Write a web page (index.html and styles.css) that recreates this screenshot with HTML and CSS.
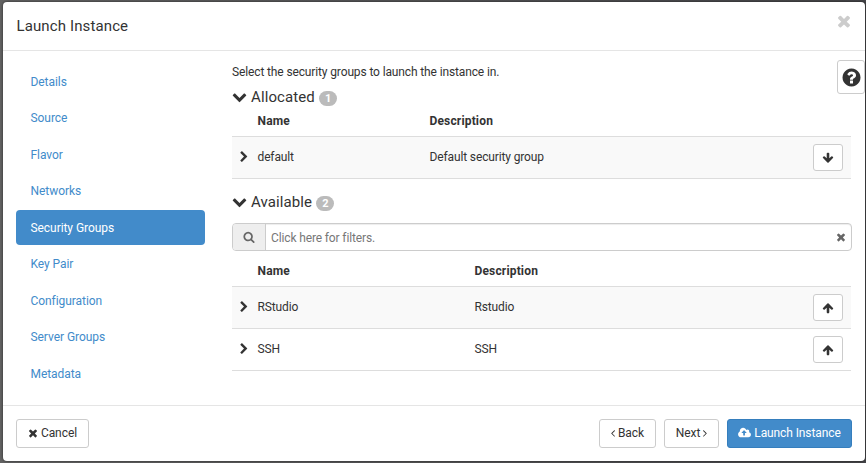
FILE: index.html
```html
<!DOCTYPE html>
<html lang="en">
<head>
<meta charset="utf-8">
<title>Launch Instance</title>
<link rel="stylesheet" href="styles.css">
</head>
<body>
<svg class="defs" aria-hidden="true">
  <symbol id="times" viewBox="0 0 1792 1792"><path d="M1490 1322q0 40-28 68l-136 136q-28 28-68 28t-68-28l-294-294-294 294q-28 28-68 28t-68-28l-136-136q-28-28-28-68t28-68l294-294-294-294q-28-28-28-68t28-68l136-136q28-28 68-28t68 28l294 294 294-294q28-28 68-28t68 28l136 136q28 28 28 68t-28 68l-294 294 294 294q28 28 28 68z"/></symbol>
  <symbol id="right" viewBox="0 0 1792 1792"><path d="M1363 877l-742 742q-19 19-45 19t-45-19l-166-166q-19-19-19-45t19-45l531-531-531-531q-19-19-19-45t19-45l166-166q19-19 45-19t45 19l742 742q19 19 19 45t-19 45z"/></symbol>
  <symbol id="down" viewBox="0 0 1792 1792"><path d="M1683 808l-742 741q-19 19-45 19t-45-19l-742-741q-19-19-19-45.500t19-45.500l166-165q19-19 45-19t45 19l531 531 531-531q19-19 45-19t45 19l166 165q19 19 19 45.500t-19 45.500z"/></symbol>
  <symbol id="arrow" viewBox="0 0 1792 1792"><path d="M1675 971q0 51-37 90l-75 75q-38 38-91 38-54 0-90-38l-294-293v704q0 52-37.500 84.500t-90.500 32.500h-128q-53 0-90.500-32.500t-37.500-84.500v-704l-294 293q-36 38-90 38t-90-38l-75-75q-38-38-38-90 0-53 38-91l651-651q35-37 90-37 54 0 91 37l651 651q37 39 37 91z"/></symbol>
  <symbol id="search" viewBox="0 0 1792 1792"><path d="M1216 832q0-185-131.500-316.500t-316.500-131.500-316.500 131.500-131.500 316.500 131.500 316.500 316.500 131.500 316.500-131.500 131.500-316.500zm512 832q0 52-38 90t-90 38q-54 0-90-38l-343-342q-179 124-399 124-143 0-273.500-55.500t-225-150-150-225-55.500-273.500 55.500-273.500 150-225 225-150 273.500-55.500 273.500 55.500 225 150 150 225 55.500 273.500q0 220-124 399l343 343q37 37 37 90z"/></symbol>
  <symbol id="question" viewBox="0 0 1792 1792"><path d="M1024 1376v-192q0-14-9-23t-23-9h-192q-14 0-23 9t-9 23v192q0 14 9 23t23 9h192q14 0 23-9t9-23zm256-672q0-88-55.500-163t-138.500-116-170-41q-243 0-371 213-15 24 8 42l132 100q7 6 19 6 16 0 25-12 53-68 86-92 34-24 86-24 48 0 85.500 26t37.500 59q0 38-20 61t-68 45q-63 28-115.500 86.500t-52.500 125.500v36q0 14 9 23t23 9h192q14 0 23-9t9-23q0-19 21.500-49.500t54.500-49.500q32-18 49-28.500t46-35 44.500-48 28-60.500 12.500-81zm384 192q0 209-103 385.500t-279.500 279.500-385.500 103-385.500-103-279.500-279.500-103-385.500 103-385.500 279.500-279.500 385.500-103 385.500 103 279.500 279.500 103 385.500z"/></symbol>
  <symbol id="angle" viewBox="580 0 620 1792"><path d="M1171 960q0 13-10 23l-466 466q-10 10-23 10t-23-10l-50-50q-10-10-10-23t10-23l393-393-393-393q-10-10-10-23t10-23l50-50q10-10 23-10t23 10l466 466q10 10 10 23z"/></symbol>
  <symbol id="cloud" viewBox="0 0 1920 1792"><path d="M1280 864q0-14-9-23l-352-352q-9-9-23-9t-23 9l-351 351q-10 12-10 24 0 14 9 23t23 9h224v352q0 13 9.500 22.500t22.500 9.500h192q13 0 22.500-9.500t9.500-22.500v-352h224q13 0 22.500-9.500t9.500-22.500zm640 288q0 159-112.500 271.500t-271.500 112.500h-1088q-185 0-316.500-131.500t-131.500-316.500q0-130 70-240t188-165q-2-30-2-43 0-212 150-362t362-150q156 0 285.500 87t188.500 231q71-62 166-62 106 0 181 75t75 181q0 76-41 138 130 31 213.500 135.500t83.500 238.500z"/></symbol>
</svg>
<div class="modal">
  <header class="modal-header">
    <h1>Launch Instance</h1>
    <svg class="close"><use href="#times"/></svg>
  </header>
  <div class="modal-body">
    <nav class="steps">
      <a>Details</a>
      <a>Source</a>
      <a>Flavor</a>
      <a>Networks</a>
      <a class="active">Security Groups</a>
      <a>Key Pair</a>
      <a>Configuration</a>
      <a>Server Groups</a>
      <a>Metadata</a>
    </nav>
    <main class="content">
      <p>Select the security groups to launch the instance in.</p>
      <h2><svg><use href="#down"/></svg><span>Allocated</span><b class="badge">1</b></h2>
      <div class="table allocated">
        <div class="row head"><span></span><span>Name</span><span>Description</span></div>
        <div class="row odd"><svg class="icon"><use href="#right"/></svg><span>default</span><span>Default security group</span><button class="move"><svg class="icon flip"><use href="#arrow"/></svg></button></div>
      </div>
      <h2 class="second"><svg><use href="#down"/></svg><span>Available</span><b class="badge">2</b></h2>
      <div class="filter">
        <span class="addon"><svg class="icon"><use href="#search"/></svg></span>
        <span class="placeholder">Click here for filters.</span>
        <svg class="icon clear"><use href="#times"/></svg>
      </div>
      <div class="table available">
        <div class="row head"><span></span><span>Name</span><span>Description</span></div>
        <div class="row odd"><svg class="icon"><use href="#right"/></svg><span>RStudio</span><span>Rstudio</span><button class="move"><svg class="icon"><use href="#arrow"/></svg></button></div>
        <div class="row"><svg class="icon"><use href="#right"/></svg><span>SSH</span><span>SSH</span><button class="move"><svg class="icon"><use href="#arrow"/></svg></button></div>
      </div>
    </main>
    <button class="help"><svg><use href="#question"/></svg></button>
  </div>
  <footer class="modal-footer">
    <button class="btn cancel"><svg class="icon"><use href="#times"/></svg>Cancel</button>
    <button class="btn back"><svg class="angle flip-x"><use href="#angle"/></svg>Back</button>
    <button class="btn next">Next<svg class="angle"><use href="#angle"/></svg></button>
    <button class="btn primary"><svg class="cloud"><use href="#cloud"/></svg>Launch Instance</button>
  </footer>
</div>
</body>
</html>
```

FILE: styles.css
```css
* { box-sizing: border-box; }
body {
  margin: 0;
  height: 463px;
  padding: 2px 1px 2px 3px;
  overflow: hidden;
  background: linear-gradient(90deg, #636363, #454548);
  font: 12px/17px Roboto, "Liberation Sans", sans-serif;
  letter-spacing: -.13px;
  color: #333;
}
svg { display: block; fill: currentColor; flex: none; }
.defs { display: none; }
.icon { width: 12px; height: 12px; }
.flip { transform: rotate(180deg); }
.flip-x { transform: scaleX(-1); }
button { font: inherit; letter-spacing: inherit; color: inherit; background: #fff; border: 1px solid #ccc; border-radius: 3px; padding: 0; }

.modal {
  height: 459px;
  display: flex;
  flex-direction: column;
  background: #fff;
  border-radius: 4px;
  box-shadow: 0 0 3px rgba(0, 0, 0, .6);
}
.modal-header {
  height: 49px;
  padding: 0 13px 0 13.500px;
  display: flex;
  align-items: center;
  justify-content: space-between;
  border-bottom: 1px solid #e5e5e5;
}
h1, h2 { margin: 0; font-weight: 400; font-size: 15px; color: #333; }
h1 { line-height: 20px; letter-spacing: .12px; }
.close { width: 18px; height: 18px; color: #ccc; margin: -10px -1px 0 0; }

.modal-body { height: 354px; display: flex; }
.steps { width: 189px; margin: 13px 27px 0 13px; display: flex; flex-direction: column; gap: 1.5px; }
.steps a { height: 35px; padding: 9.500px 14.500px 0; color: #428bca; border-radius: 4px; letter-spacing: -.06px; }
.steps .active { background: #428bca; color: #fff; }

.content { width: 620px; padding-top: 13px; }
p { margin: 0; }
h2 { display: flex; align-items: center; height: 18px; margin-top: 7px; letter-spacing: .1px; }
h2 svg { width: 15px; height: 15px; margin: -1px 4px 0 0; }
.badge { background: #bbb; color: #fff; font-size: 11px; font-weight: 700; line-height: 15px; height: 15px; padding: 0 6px; border-radius: 8px; margin: 3px 0 0 4px; letter-spacing: 0; }
h2.second { margin-top: 14px; }
.table { width: 619px; }
.row { display: grid; align-items: center; height: 42px; border-bottom: 1px solid #ddd; padding-right: 8px; }
.row > .icon { margin: -2px 0 0 5.500px; }
.allocated .row { grid-template-columns: 25.500px 172px 1fr 30px; }
.available .row { grid-template-columns: 25.500px 217px 1fr 30px; }
.head { height: 31px; font-weight: 700; letter-spacing: .16px; }
.available .head { height: 36px; padding-top: 5px; }
.odd { background: #f9f9f9; }
.move { width: 30px; height: 27px; display: grid; place-items: center; }

.filter { width: 620px; height: 28px; margin-top: 12px; display: flex; align-items: center; border: 1px solid #ccc; border-radius: 4px; overflow: hidden; box-shadow: inset 0 1px 1px rgba(0, 0, 0, .075); }
.addon { width: 33px; height: 26px; display: grid; place-items: center; background: #eee; border-right: 1px solid #ccc; color: #666; }
.placeholder { flex: 1; padding: 2px 0 0 5px; color: #777; }
.clear { color: #666; margin-right: 4.500px; }

.help { width: 28px; height: 34px; display: grid; place-items: center; position: absolute; top: 60px; right: 1px; }
.help svg { width: 21px; height: 21px; }

.modal-footer { height: 56px; display: flex; gap: 8px; padding: 13px 13px 0; border-top: 1px solid #e5e5e5; }
.btn { height: 29px; display: flex; align-items: center; justify-content: center; gap: 3px; letter-spacing: -.05px; }
.btn svg { margin-top: -1px; }
.cancel { width: 73px; margin-right: auto; gap: 2px; padding-right: 1px; }
.back { width: 57px; }
.next { width: 55px; }
.primary { width: 125px; background: #428bca; border-color: #357ebd; color: #fff; letter-spacing: -.1px; }
.angle { width: 4px; height: 12px; }
.cloud { width: 13px; height: 12px; }
```
